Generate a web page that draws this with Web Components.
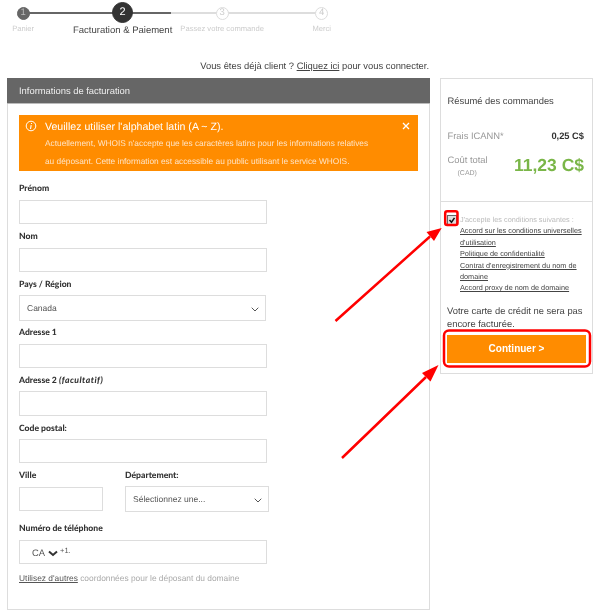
<!DOCTYPE html><html lang="en">
<head>
    <meta charset="UTF-8">
    <meta name="viewport" content="width=device-width, initial-scale=1.0">
    <title>Facturation</title>
    <style>
        html, body { margin: 0; background: #fff; }
        /* the reference is a scaled down capture, hence the slight blur */
        body { font-family: "Liberation Sans", Arial, sans-serif; color: #444; position: relative; height: 614px; overflow: hidden; text-rendering: geometricPrecision; filter: blur(.3px); }
    </style>
</head>
<body>
    <checkout-stepper></checkout-stepper>
    <login-hint></login-hint>
    <checkout-layout>
        <billing-card></billing-card>
        <order-summary slot="side"></order-summary>
    </checkout-layout>
    <red-annotations></red-annotations>
<script>
    const chevron = `<svg width="8" height="5" viewBox="0 0 8 5"><path d="M.7.7L4 4 7.300.7" fill="none" stroke="#555" stroke-width="1"/></svg>`;

    class CheckoutStepper extends HTMLElement {
        constructor() {
            super();
            this.attachShadow({ mode: "open" });
            const steps = ["Panier", "Facturation & Paiement", "Passez votre commande", "Merci"];
            this.shadowRoot.innerHTML = `
                <style>
                    :host { display: flex; height: 58px; margin-left: -26.600px; width: 398px;
                        background: linear-gradient(90deg, #666 0 148px, #ddd 148px) no-repeat 50px 12px / 298px 2px; }
                    .step { width: 99.6px; display: flex; flex-direction: column; align-items: center; white-space: nowrap; padding-top: 6.5px; box-sizing: border-box; }
                    .dot { width: 13px; height: 13px; border-radius: 50%; box-sizing: border-box; border: 1.2px solid #ddd; background: #fff; color: #ccc; font-size: 9.5px; line-height: 10.600px; text-align: center; }
                    .label { font-size: 7.6px; color: #ccc; margin-top: 3.5px; line-height: 12px; }
                    .done .dot { background: #666; border-color: #666; color: #bbb; }
                    .now { padding-top: 2px; }
                    .now .dot { width: 21px; height: 21px; background: #333; border-color: #333; color: #fff; font-size: 11px; line-height: 18.600px; }
                    .now .label { font-size: 9.5px; color: #444; margin-top: 1px; line-height: 13px; }
                </style>
                ${steps.map((s, i) => `
                    <div class="step ${i == 0 ? "done" : i == 1 ? "now" : ""}"><div class="dot">${i + 1}</div><div class="label">${s.replace("&", "&amp;")}</div></div>
                `).join("")}
            `;
        }
    }

    class LoginHint extends HTMLElement {
        constructor() {
            super();
            this.attachShadow({ mode: "open" });
            this.shadowRoot.innerHTML = `
                <style>
                    :host { display: block; width: 429px; text-align: right; font-size: 9.4px; line-height: 14px; color: #444; height: 20px; padding-top: 1px; margin-bottom: -1px; }
                    a { color: inherit; text-decoration: underline; }
                </style>
                Vous êtes déjà client ? <a>Cliquez ici</a> pour vous connecter.
            `;
        }
    }

    class CheckoutLayout extends HTMLElement {
        constructor() {
            super();
            this.attachShadow({ mode: "open" });
            this.shadowRoot.innerHTML = `
                <style>
                    :host { display: flex; gap: 10px; padding-left: 7px; align-items: flex-start; }
                </style>
                <slot></slot><slot name="side"></slot>
            `;
        }
    }

    class FormField extends HTMLElement {
        constructor() {
            super();
            this.attachShadow({ mode: "open" });
            const kind = this.getAttribute("kind") || "text";
            const value = this.getAttribute("value") || "";
            const inner = kind == "select"
                ? `<div class="box sel"><span>${value}</span>${chevron}</div>`
                : kind == "phone"
                ? `<div class="box phone"><span>CA</span><svg width="10" height="7" viewBox="0 0 10 7"><path d="M1 1.500l4 3.500 4-3.500" fill="none" stroke="#333" stroke-width="2"/></svg><sup>+1.</sup></div>`
                : `<input type="text">`;
            this.shadowRoot.innerHTML = `
                <style>
                    :host { display: block; }
                    label { display: block; font: 900 8.6px/12px Lato, sans-serif; color: #333; margin-bottom: var(--label-gap, 6px); }
                    ::slotted(em) { letter-spacing: .5px; }
                    input, .box { display: flex; align-items: center; box-sizing: border-box; width: var(--w, 248px); height: var(--h, 24px); border: 1px solid #ddd; background: #fff; margin: 0; padding: 0; outline: none; font: 8.5px "Liberation Sans", sans-serif; color: #555; }
                    .sel { justify-content: space-between; padding: 0 6px 0 7px; }
                    .sel svg { margin-top: 3px; }
                    .phone { padding: 1px 0 0 12px; font-size: 9.4px; gap: 3px; }
                    .phone svg { margin-top: 1px; }
                    .phone sup { font-size: 7.5px; margin: -3px 0 0 -1px; line-height: 1; }
                </style>
                <label><slot></slot></label>
                ${inner}
            `;
        }
    }

    class AlertBox extends HTMLElement {
        constructor() {
            super();
            this.attachShadow({ mode: "open" });
            this.shadowRoot.innerHTML = `
                <style>
                    :host { display: flex; box-sizing: border-box; height: 56px; width: 399px; background: #ff8c00; color: #fff; padding: 5px 8px 0 6px; gap: 8px; }
                    .ic { flex: none; margin-top: 0; }
                    .txt { flex: 1; }
                    h4 { margin: 0; font: 400 10.6px/14px "Liberation Sans", sans-serif; height: 15px; }
                    p { margin: 0; font-size: 8.32px; line-height: 17.5px; color: #ffe3c2; white-space: nowrap; }
                    .x { flex: none; margin-top: 2px; }
                </style>
                <svg class="ic" width="12" height="12" viewBox="0 0 12 12"><circle cx="6" cy="6" r="4.800" fill="none" stroke="#fff" stroke-width="1"/><path d="M6.500 3.100v.9M6.200 5.200L5.500 9" stroke="#fff" stroke-width="1.100" fill="none"/></svg>
                <div class="txt">
                    <h4>Veuillez utiliser l'alphabet latin (A ~ Z).</h4>
                    <p>Actuellement, WHOIS n'accepte que les caractères latins pour les informations relatives<br>au déposant. Cette information est accessible au public utilisant le service WHOIS.</p>
                </div>
                <svg class="x" width="8" height="8" viewBox="0 0 8 8"><path d="M1 1l6 6M7 1L1 7" stroke="#fff" stroke-width="1.300"/></svg>
            `;
        }
    }

    class BillingCard extends HTMLElement {
        constructor() {
            super();
            this.attachShadow({ mode: "open" });
            this.shadowRoot.innerHTML = `
                <style>
                    :host { display: block; width: 423px; height: 532px; box-sizing: border-box; border: 1px solid #ddd; border-top: 0; }
                    header { height: 25px; margin: 0 -1px; background: #666; border-bottom: 1px solid #bbb; color: #eee; font-size: 9.4px; line-height: 25px; padding-left: 12px; }
                    .body { padding: 11px 11px 0; }
                    alert-box { margin-bottom: 11px; }
                    form-field { margin-bottom: 6px; }
                    .sel { --h: 26px; --w: 247px; --label-gap: 5px; margin-bottom: 5px; }
                    .addr2 { --h: 25px; --label-gap: 5px; margin-bottom: 5.500px; }
                    .zip { --label-gap: 5.500px; }
                    .row { display: flex; gap: 22px; }
                    .ville { --w: 84px; }
                    .dept { --h: 26px; --w: 144px; --label-gap: 5px; margin-bottom: 10px; }
                    .tel { margin-bottom: 8px; }
                    .other { font-size: 8.4px; color: #aaa; line-height: 12px; }
                    .other a { color: #555; text-decoration: underline; }
                    em { font-style: italic; letter-spacing: .5px; }
                </style>
                <header>Informations de facturation</header>
                <div class="body">
                    <alert-box></alert-box>
                    <form-field>Prénom</form-field>
                    <form-field>Nom</form-field>
                    <form-field class="sel" kind="select" value="Canada">Pays / Région</form-field>
                    <form-field>Adresse 1</form-field>
                    <form-field class="addr2">Adresse 2 <em>(facultatif)</em></form-field>
                    <form-field class="zip">Code postal:</form-field>
                    <div class="row">
                        <form-field class="ville">Ville</form-field>
                        <form-field class="dept" kind="select" value="Sélectionnez une...">Département:</form-field>
                    </div>
                    <form-field class="tel" kind="phone">Numéro de téléphone</form-field>
                    <div class="other"><a>Utilisez d'autres</a> coordonnées pour le déposant du domaine</div>
                </div>
            `;
        }
    }

    class OrderSummary extends HTMLElement {
        constructor() {
            super();
            this.attachShadow({ mode: "open" });
            this.shadowRoot.innerHTML = `
                <style>
                    :host { display: block; width: 153px; height: 296px; box-sizing: border-box; border: 1px solid #ddd; color: #444; }
                    .top { height: 123px; box-sizing: border-box; padding: 15px 8px 0 6.500px; border-bottom: 1px solid #ddd; }
                    h3 { margin: 0 0 21px; font: 400 9.4px/14px "Liberation Sans", sans-serif; color: #444; }
                    .line { display: flex; justify-content: space-between; align-items: center; font-size: 9.4px; color: #999; line-height: 14px; }
                    .line b { font-size: 9.3px; color: #333; }
                    .total { margin-top: 10px; align-items: flex-start; }
                    .total small { display: block; font-size: 7px; line-height: 12px; padding-left: 10px; margin-top: 1px; }
                    .total b { font-size: 17.500px; color: #7ab648; line-height: 24px; }
                    .bottom { padding: 12px 6px 0 6px; }
                    .agree { display: flex; gap: 3px; font-size: 7.300px; line-height: 11.400px; }
                    .check { flex: none; margin: 1px 0 0 0; }
                    .agree span { color: #bbb; display: block; }
                    .agree a { display: block; color: #444; text-decoration: underline; }
                    p { margin: 10px 0 0; font-size: 9.4px; line-height: 13.500px; color: #444; }
                    button { display: block; width: 139px; height: 28px; margin: 4px 0 0; border: 0; background: #ff8c00; color: #fff; font: 700 10px "Liberation Sans", sans-serif; padding: 0; }
                </style>
                <div class="top">
                    <h3>Résumé des commandes</h3>
                    <div class="line"><span>Frais ICANN*</span><b>0,25 C$</b></div>
                    <div class="line total"><span>Coût total<small>(CAD)</small></span><b>11,23 C$</b></div>
                </div>
                <div class="bottom">
                    <div class="agree">
                        <svg class="check" width="10" height="10" viewBox="0 0 10 10"><rect x=".5" y=".5" width="9" height="9" fill="#ddd" stroke="#666"/><path d="M2.500 5l2 2.200 3-4.400" fill="none" stroke="#111" stroke-width="1.500"/></svg>
                        <div>
                            <span>J'accepte les conditions suivantes :</span>
                            <a>Accord sur les conditions universelles d'utilisation</a>
                            <a>Politique de confidentialité</a>
                            <a>Contrat d'enregistrement du nom de domaine</a>
                            <a>Accord proxy de nom de domaine</a>
                        </div>
                    </div>
                    <p>Votre carte de crédit ne sera pas encore facturée.</p>
                    <button>Continuer &gt;</button>
                </div>
            `;
        }
    }

    // red marks drawn over the screenshot, free canvas on purpose
    class RedAnnotations extends HTMLElement {
        constructor() {
            super();
            this.attachShadow({ mode: "open" });
            this.shadowRoot.innerHTML = `
                <style>
                    :host { display: block; position: absolute; inset: 0; pointer-events: none; }
                </style>
                <svg width="600" height="614" viewBox="0 0 600 614">
                    <g fill="none" stroke="#f00">
                        <rect x="445.200" y="211.200" width="12.300" height="13.800" rx="2" stroke-width="2.500"/>
                        <rect x="444" y="330.500" width="146" height="36" rx="5" stroke-width="2.500"/>
                        <path d="M335.500 321L430 236.500M342 458L426 377" stroke-width="2.500"/>
                    </g>
                    <path d="M441.700 228L426.500 232L434 241Z M438.500 365L422 373L430.500 381.500Z" fill="#f00"/>
                </svg>
            `;
        }
    }

    customElements.define("checkout-stepper", CheckoutStepper);
    customElements.define("login-hint", LoginHint);
    customElements.define("checkout-layout", CheckoutLayout);
    customElements.define("form-field", FormField);
    customElements.define("alert-box", AlertBox);
    customElements.define("billing-card", BillingCard);
    customElements.define("order-summary", OrderSummary);
    customElements.define("red-annotations", RedAnnotations);
</script>
</body>
</html>
